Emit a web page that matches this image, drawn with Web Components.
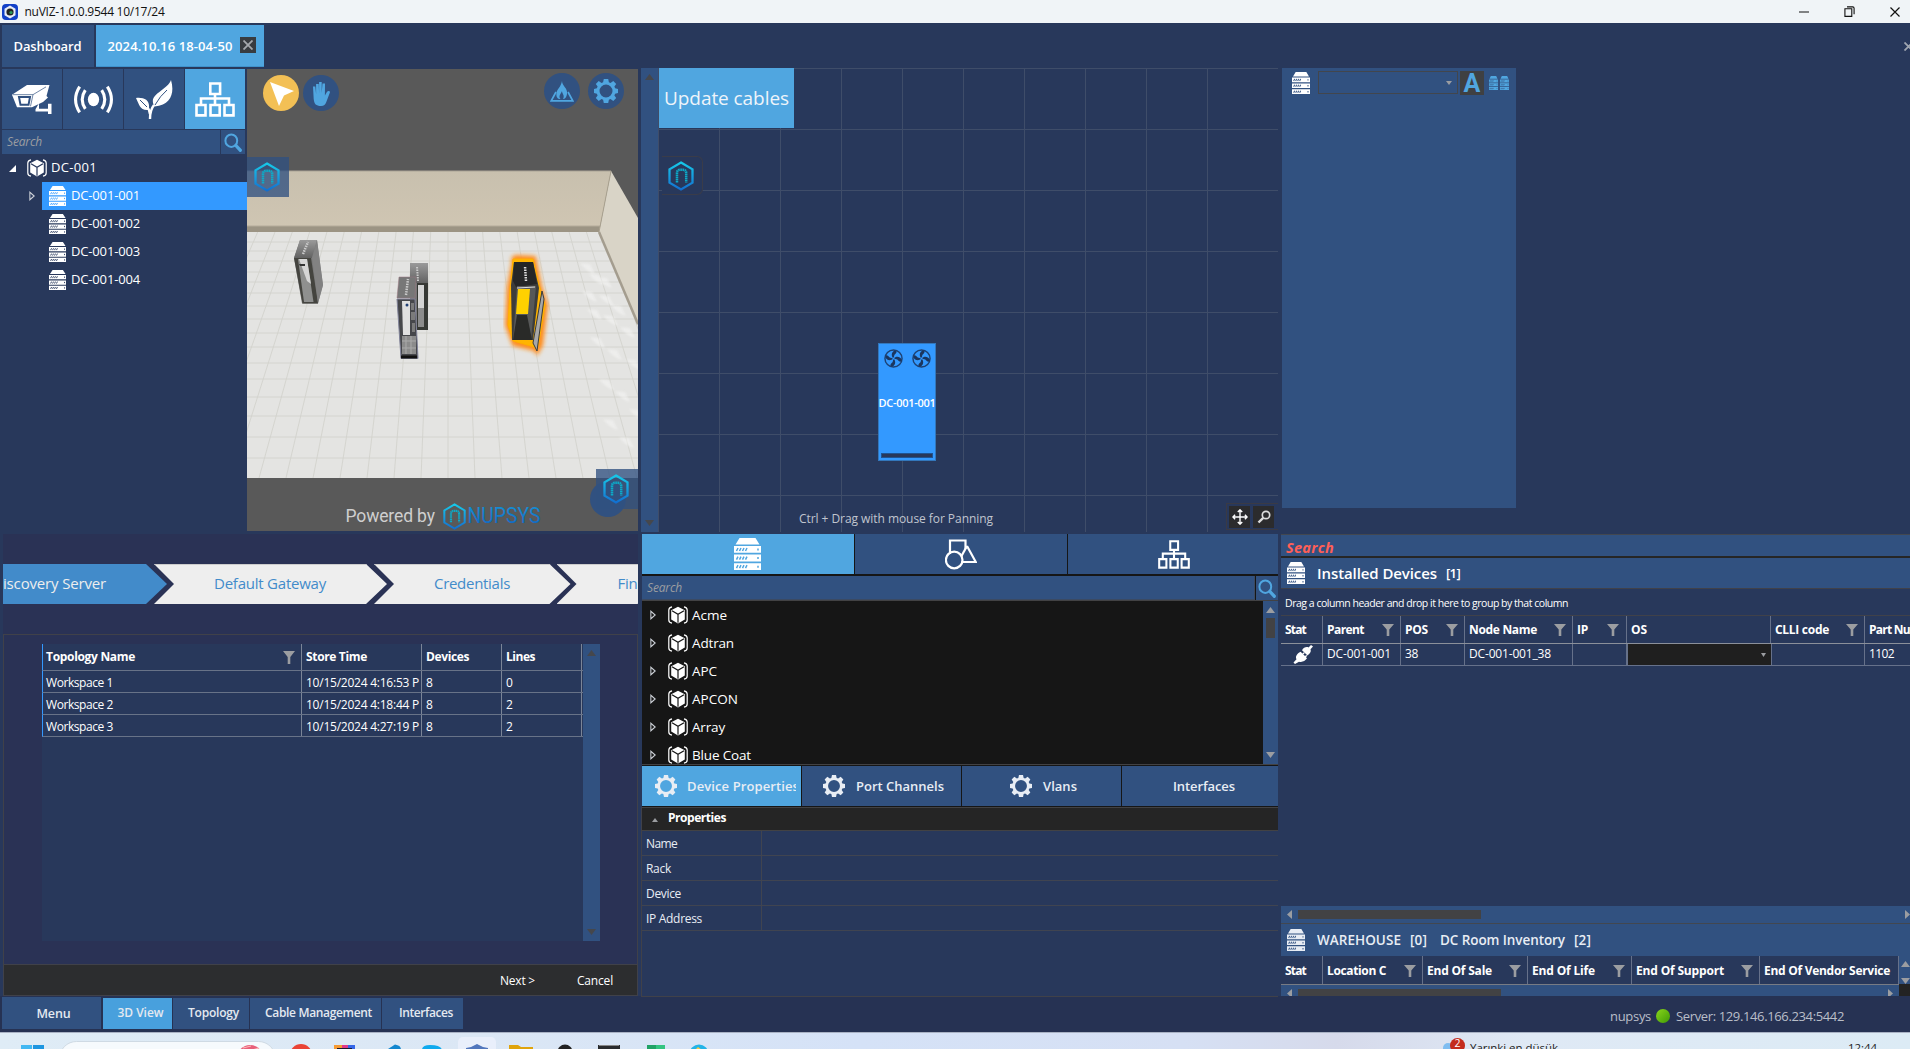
<!DOCTYPE html>
<html lang="en">
<head>
<meta charset="utf-8">
<title>nuVIZ</title>
<style>
html,body{margin:0;width:1910px;height:1049px;overflow:hidden;background:#28385b}
body{font-family:"Open Sans","Noto Sans",sans-serif;font-size:12.5px;color:#fff;line-height:1}
</style>
</head>
<body>
<nu-app></nu-app>
<script>
const ICONS = {
server: ['0 0 27 32', `<path fill="currentColor" d="M5.500 0h16L25.500 6.500h-24zM0 8h27v6.800H0zM0 16.600h27v6.800H0zM0 25.200h27V32H0z"/><g stroke="var(--hole,#28385b)" stroke-width="1.500"><path d="M2.500 13l1.500-3M5.500 13l1.500-3M8.500 13l1.500-3M11.500 13l1.500-3M2.500 21.600l1.500-3M5.500 21.600l1.500-3M8.500 21.600l1.500-3M11.500 21.600l1.500-3M2.500 30.200l1.500-3M5.500 30.200l1.500-3M8.500 30.200l1.500-3M11.500 30.200l1.500-3M24 10.500v2M24 19v2M24 27.700v2"/></g>`],
cube: ['0 0 20 18', `<path fill="currentColor" d="M10 .8l6.800 3.500v9.300L10 17.400 3.200 13.600V4.300z"/><path d="M4 4.700l6 3.600 6-3.600M10 8.300v8.500" fill="none" stroke="var(--hole,#28385b)" stroke-width="1.200"/><path d="M4 .8C1.500 1.300.8 2 .8 4v10c0 2 .7 2.700 3.200 3.200M16 .8c2.500.5 3.200 1.200 3.200 3.200v10c0 2-.7 2.700-3.200 3.200" fill="none" stroke="currentColor" stroke-width="1.200"/>`],
net: ['0 0 40 35', `<path fill="none" stroke="currentColor" stroke-width="2.600" d="M15.300 1.500h9.800v10.500h-9.800zM1.500 23h9v10.400h-9zM15.500 23h9.200v10.400h-9.200zM29.500 23h9v10.400h-9zM20 12v11M6 23v-6.500h28V23"/>`],
camera: ['0 0 40 31', `<path fill="currentColor" d="M0 11L15 1h22.500l-3 11.500L36 14l-5 4.500-11 5.500H5z"/><path d="M7 13.500h11l-1.500 8H8.500z" fill="none" stroke="#315180" stroke-width="2"/><path d="M21 11l-2.500 12M1 11h20l13-8" fill="none" stroke="#315180" stroke-width=".7"/><path d="M27 20v5.500h9v-5h3.500V31H36v-2.500H23.500v-2.500" fill="currentColor"/>`],
waves: ['0 0 40 28', `<ellipse cx="20" cy="14" rx="5.500" ry="6.500" fill="currentColor"/><path fill="none" stroke="currentColor" stroke-width="3" d="M12 5q-6 9 0 18M6.500 1.500q-8 12.500 0 25M28 5q6 9 0 18M33.500 1.500q8 12.500 0 25"/>`],
leaf: ['0 0 37 39', `<path fill="currentColor" d="M35 0C38.500 12 36 25 18.500 26.500 11 14 31 11 35 0zM0 18c9-1 15 3 12.500 12C4 31 3 24 0 18z"/><path d="M18 25Q14 30 14 39M3 20Q13 25 14 34" stroke="currentColor" stroke-width="2.400" fill="none"/><path d="M31 10Q24 16 19 25M4 20l7 7" stroke="#315180" fill="none"/>`],
search: ['0 0 18 18', `<circle cx="7.300" cy="7.300" r="5.900" fill="none" stroke="currentColor" stroke-width="2"/><path d="M12 12l4.300 4.300" stroke="currentColor" stroke-width="3.200" stroke-linecap="round"/>`],
gear: ['0 0 24 24', `<path fill="currentColor" fill-rule="evenodd" d="M9.800 0h4.400l.7 3.200 1.600.7L19.300 2l2.900 2.900-1.800 2.700.7 1.700 2.900.6v4.200l-2.900.6-.7 1.700 1.800 2.700-2.900 2.900-2.800-1.900-1.600.7-.7 3.200H9.800l-.7-3.200-1.600-.7L4.700 22l-2.900-2.900 1.800-2.700-.7-1.700L0 14.100V9.900l2.900-.6.7-1.700L1.800 4.900 4.700 2l2.800 1.900 1.600-.7zM12 5.500a6.500 6.500 0 100 13 6.500 6.500 0 000-13z"/>`],
filter: ['0 0 12 13', `<path fill="#9b9da1" d="M0 0h12L7.300 6v7H4.700V6z"/>`],
pointer: ['0 0 24 24', `<path fill="#fff" d="M0 0l24 9-10 4.500L9 24z"/>`],
hand: ['0 0 18 24', `<path fill="currentColor" d="M1 4.500h2.300l.8 7.500V2h2.600l.4 9V0h2.600v11L10.500 1.500H13l-.1 12 2-3.500c1-1.700 3.400-1.200 3 .6l-3.600 9.400c-1 2.700-2.300 4-5.300 4-5 0-6.800-2-7.300-7z"/>`],
fire: ['0 0 24 21', `<path fill="none" stroke="currentColor" stroke-width="1.700" d="M6 11L1.200 19.800h21.600L18 11"/><path fill="currentColor" d="M12 0c0 5 6 7 5 13-.4 3-2 5-4 5 2-4-1-5-1-8-1 3-4 5-1.500 8-3 0-4.500-2-4-6C7 8 11 6 12 0z"/>`],
hex: ['0 0 26 30', `<defs><linearGradient id="g" x2="0" y2="1"><stop stop-color="#16c8e8"/><stop offset=".6" stop-color="#1696dc"/><stop offset="1" stop-color="#116fd0"/></linearGradient></defs><path d="M13 1.500l11.500 6.800v13.400L13 28.500 1.500 21.700V8.300z" fill="none" stroke="url(#g)" stroke-width="2.300"/><path d="M9 21.500V12q0-3.200 3-3.200h3q3.200 0 3.200 3.200v9.500" fill="none" stroke="#0caac8" stroke-width="2.500" stroke-dasharray="1.600 .5"/>`],
shapes: ['0 0 32 31', `<g fill="none" stroke="currentColor" stroke-width="2.200"><path d="M5 15V1.500h15.500v8.500"/><circle cx="9.200" cy="21" r="8.300"/><path d="M22 7l8.800 16H16.500"/><path d="M22 7l-5.500 10"/></g>`],
fan: ['0 0 20 20', `<circle cx="10" cy="10" r="9" fill="none" stroke="#1d4173" stroke-width="1.500"/><path fill="#1b365f" d="M10 10C7 7 8 3 11 1.500c4 0 2 3 0 4.500zM10 10c3-3 7-2 8.500 1 0 4-3 2-4.500 0zM10 10c3 3 2 7-1 8.500-4 0-2-3 0-4.500zM10 10c-3 3-7 2-8.500-1 0-4 3-2 4.500 0z"/><circle cx="10" cy="10" r="1" fill="#3399ff"/>`],
move: ['0 0 18 18', `<path fill="none" stroke="#fff" stroke-width="1.600" d="M9 1v16M1 9h16M6.500 3.500L9 1l2.500 2.500M6.500 14.500L9 17l2.500-2.500M3.500 6.500L1 9l2.500 2.500M14.500 6.500L17 9l-2.500 2.500"/>`],
zoom: ['0 0 14 14', `<circle cx="9" cy="5" r="3.700" fill="none" stroke="#ddd" stroke-width="1.700"/><path d="M6.200 7.800L1.500 12.500" stroke="#ddd" stroke-width="2.400"/>`],
plug: ['0 0 20 20', `<path fill="currentColor" d="M18 0l2 1.500-2.500 3c1 3-1 5-3 6.500L9 5.500C10.500 3 13 1.500 15.500 2.500zM7.500 7l2 2 1.300-1.300.9.900-1.400 1.400 1.700 1.700 1.300-1.300.9.900L13 13l1 1c-2 3-5 4.500-8 3.500L2 20 .5 18.500l3-3.500C2 12 4 9 7.500 7z"/>`],
restore: ['0 0 12 12', `<path fill="none" stroke="#111" stroke-width="1.200" d="M1 3h7.500v8.300H1zM3.300 1h6.200q1.500 0 1.500 1.500V9"/>`],
x: ['0 0 10 10', `<path stroke="currentColor" stroke-width="var(--sw,1.200)" d="M.5.5l9 9M9.500.5l-9 9"/>`],
up: ['0 0 9 6', `<path fill="currentColor" d="M4.500 0L9 6H0z"/>`],
down: ['0 0 9 6', `<path fill="currentColor" d="M4.500 6L9 0H0z"/>`],
left: ['0 0 6 9', `<path fill="currentColor" d="M0 4.500L6 0v9z"/>`],
right: ['0 0 6 9', `<path fill="currentColor" d="M6 4.500L0 0v9z"/>`],
closed: ['0 0 7 10', `<path fill="none" stroke="#cfd3da" stroke-width="1.200" d="M1 1.200L6 5 1 8.800z"/>`],
open: ['0 0 7 7', `<path fill="#fff" d="M7 0v7H0z"/>`],
app: ['0 0 16 16', `<rect width="16" height="16" rx="4" fill="#1240c8"/><path d="M8 1.500l5.500 3.200v6.600L8 14.500l-5.500-3.200V4.700z" fill="#e8ecf4"/><circle cx="8" cy="8" r="3.600" fill="#222"/><circle cx="9" cy="8.500" r="1.600" fill="#2c9a5a"/>`]
};

function define(name, render) {
  customElements.define(name, class extends HTMLElement {
    constructor() { super(); this.attachShadow({mode: 'open'}); }
    connectedCallback() { if (!this.shadowRoot.firstChild) this.shadowRoot.innerHTML = render(this); }
  });
}
const attr = (e, n, d = '') => e.hasAttribute(n) ? e.getAttribute(n) : d;
const I = (n, w, h, s = '') => `<ui-icon name="${n}" w="${w}" h="${h}" style="${s}"></ui-icon>`;
const T = (t, w, s = '') => `<ui-text w="${w}" style="${s}">${t}</ui-text>`;

/* Label whose tracking is tuned so that it fills the given width. */
customElements.define('ui-text', class extends HTMLElement {
  constructor() {
    super();
    this.attachShadow({mode: 'open'}).innerHTML = '<style>:host{display:inline-block;white-space:pre;flex:none;line-height:1.4}</style><span><slot></slot></span>';
  }
  connectedCallback() { queueMicrotask(() => this.fit()); }
  fit() {
    const w = +this.getAttribute('w'), n = this.textContent.length;
    if (!w || !n) return;
    const span = this.shadowRoot.querySelector('span');
    const natural = span.getBoundingClientRect().width;
    if (natural) span.style.letterSpacing = ((w - natural) / n).toFixed(3) + 'px';
  }
});

define('ui-icon', e => {
  const [vb, body] = ICONS[attr(e, 'name')];
  return `<style>:host{display:block;flex:none;width:${attr(e,'w')}px;height:${attr(e,'h')}px}svg{display:block;width:100%;height:100%}</style><svg viewBox="${vb}" preserveAspectRatio="none">${body}</svg>`;
});

/* Scroll bar: dir is v or h; thumb is "before,length". */
define('ui-scroll', e => {
  const v = attr(e, 'dir', 'v') === 'v', th = attr(e, 'thumb');
  const [a, l] = th.split(',');
  return `<style>:host{display:flex;box-sizing:border-box;flex:none;flex-direction:${v?'column':'row'};align-items:center;justify-content:space-between;background:#315180;color:${attr(e,'color','#9b9da1')};padding:${attr(e,'pad',v?'6px 0':'0 6px')};overflow:hidden}
  .track{flex:1;align-self:stretch;display:flex;flex-direction:${v?'column':'row'};align-items:center}
  .thumb{background:#424244;${v?`width:9px;height:${l}px;margin-top:${a}px`:`height:9px;width:${l}px;margin-left:${a}px`}}</style>
  ${I(v?'up':'left', v?9:5, v?6:9)}<div class="track">${th?'<div class="thumb"></div>':''}</div>${I(v?'down':'right', v?9:5, v?6:9)}`;
});

define('nu-titlebar', () => `<style>:host{display:flex;align-items:center;height:23px;background:#f0f4f7;color:#111;padding-left:2px}
.w{margin-left:auto;display:flex;align-items:center;height:20px}</style>
${I('app',16,16)}${T('nuVIZ-1.0.0.9544 10/17/24',140,'margin-left:6.500px;font-size:12px;margin-top:1px')}
<div class="w"><svg width="10" height="2"><path d="M0 1h10" stroke="#111"/></svg>${I('restore',11,11,'margin-left:35px')}${I('x',10,10,'margin:0 10px 0 35px')}</div>`);

define('nu-doctabs', () => `<style>:host{display:flex;height:45px;padding:2px 0 0 2px;gap:2px;box-sizing:border-box;font-size:13px;font-weight:600}
div{height:42px;box-sizing:border-box;background:#315180;display:flex;align-items:center;padding:1px 12px 0 11.500px}
.a{background:#50a6e0;border-bottom:1px solid #3f92cc;padding:1px 8px 0 12px}.c{width:16px;height:16px;padding:3px;background:#383b40;color:#a5a8ad;--sw:1.800;margin:-2px 0 0 7px}
.z{background:none;padding:0;margin-left:auto;width:6px;overflow:hidden;color:#9fa5b0;--sw:2}</style>
<div>${T('Dashboard',68)}</div><div class="a">${T('2024.10.16 18-04-50',125)}<div class="c">${I('x',10,10)}</div></div><div class="z">${I('x',9,9)}</div>`);

define('nu-searchbox', e => `<style>:host{display:flex;height:24px;gap:1px;font-style:italic;font-size:12px;color:#9b9da1}
.f{flex:1;background:#315180;display:flex;align-items:center;padding:1px 0 0 5px;box-sizing:border-box;border:solid #3b4a63;border-width:0 ${attr(e,'line','0')}px ${attr(e,'line','0')}px 0}.b{width:${attr(e,'bw','24')}px;background:#315180;color:#50a6e0;display:flex;align-items:center;justify-content:center;overflow:hidden}</style>
<div class="f">${T('Search',35)}</div><div class="b">${I('search',18,19)}</div>`);

define('nu-toolbar', () => `<style>:host{display:flex;gap:1px;height:60px}div{width:60px;display:flex;align-items:center;justify-content:center;background:#315180}div:last-child{background:#50a6e0}</style>
<div>${I('camera',40,30)}</div><div>${I('waves',41,29)}</div><div>${I('leaf',37,39)}</div><div>${I('net',40,35)}</div>`);

define('nu-sitetree', () => {
  const row = (n, sel) => `<div class="r"><span class="e">${sel?I('closed',6,10):''}</span><div class="n ${sel?'s':''}">${I('server',17.5,20,sel?'--hole:#3399ff':'')}${T(n,69,'margin:-2px 0 0 5px')}</div></div>`;
  return `<style>:host{display:block;font-size:13px}.r{display:flex;height:28px;align-items:center}.e{width:13px;padding-left:29px;flex:none}.n{height:28px;flex:1;display:flex;align-items:center;padding-left:6.500px}.s{background:#3399ff}</style>
  <div class="r">${I('open',7,7,'margin-left:9px')}${I('cube',20,18,'margin-left:11px')}${T('DC-001',46,'margin:-1px 0 0 4px')}</div>
  ${row('DC-001-001',1)}${row('DC-001-002')}${row('DC-001-003')}${row('DC-001-004')}`;
});

define('nu-scene', () => {
  let tiles = '';
  for (let k = -13; k < 15; k++) tiles += `M${201+17.3*k} 163L${201+27*k} 409`;
  for (const y of [173,182,192,203,213,224,237,250,264,278,294,310,328,347,368,389]) tiles += `M0 ${y}H391`;
  let gloss = '';
  for (const [x,y] of [[333,194],[342,205],[350,208],[335,222],[352,226],[364,236],[340,240],[356,246],[373,258],[343,268],[360,280],[379,290],[352,310],[368,322],[382,340],[356,350],[372,368]]) gloss += `M${x} ${y}q6 9 15 11l-5-10z`;
  return `<style>:host{display:block;position:relative;width:391px;height:462px;background:#595959;overflow:hidden}
  svg.s{display:block}.c{position:absolute;width:36px;height:36px;border-radius:50%;background:#315180;color:#50a6e0;display:flex;align-items:center;justify-content:center}
  .l{position:absolute;width:42px;height:40px;box-sizing:border-box;padding:5px 0 0 7px;background:rgba(49,81,128,.78)}</style>
  <svg class="s" width="391" height="462">
  <defs><linearGradient id="w" x2="0" y2="1"><stop stop-color="#c8c0ae"/><stop offset="1" stop-color="#d0c6b3"/></linearGradient>
  <linearGradient id="k" x2="0" y2="1"><stop stop-color="#9a9a9a"/><stop offset="1" stop-color="#626262"/></linearGradient>
  <linearGradient id="n" x2="0" y2="1"><stop stop-color="#1596d8"/><stop offset="1" stop-color="#1263c0"/></linearGradient>
  <clipPath id="f"><path d="M0 163H352L391 254V409H0z"/></clipPath><filter id="b"><feGaussianBlur stdDeviation="2"/></filter><filter id="b1"><feGaussianBlur stdDeviation="1"/></filter></defs>
  <path d="M0 102H364L352 163H0z" fill="url(#w)"/><path d="M0 102H364" stroke="#aaa396"/>
  <path d="M0 157H353V163H0z" fill="#9c9484"/><path d="M0 157H353" stroke="#b4ab9a"/>
  <path d="M364 102L391 149V256L352 163z" fill="#d9d4c7"/><path d="M364 102l-12 61" stroke="#a9a18f"/>
  <path d="M0 163H352L391 256V409H0z" fill="#e4e4e2"/>
  <g clip-path="url(#f)"><path d="${tiles}" stroke="#d2d2cd" stroke-width=".9"/><path d="${gloss}" fill="#f6f6f5" opacity=".55" filter="url(#b1)"/></g>
  <path d="M352 163L391 255" stroke="#a49d8f" stroke-width="2.500"/>
  <path d="M53 171H70L76 216 71 234.500H55L47 189z" fill="#777"/><path d="M53 171H70L65 189H47z" fill="url(#k)"/><path d="M47 189H64L71 234.500H55.500z" fill="#44443f"/><path d="M51 190H60L66.500 233H57z" fill="#8f908f"/><path d="M52 190h8l4 25-4-3z" fill="#d6d6d6"/><path d="M52 195h6v2h-5z" fill="#333"/><path d="M65 189L70 171 76 216 71 234z" fill="#858585" opacity=".8"/><path d="M56 185l5-12" stroke="#ccc" stroke-width="2.500" stroke-dasharray="1.500 1"/>
  <path d="M163 194H181V261H163z" fill="#777"/><path d="M163 194H181V214H163z" fill="url(#k)"/><path d="M170 214H181V261H170z" fill="#373935"/><path d="M171 216h6v23h-6z" fill="#d4d4d4"/><path d="M171 239h6v19h-6z" fill="#8c8c8c"/><path d="M171 212l-1-15" stroke="#ccc" stroke-width="2" stroke-dasharray="1.500 1"/>
  <path d="M152 208H169L168 229H150z" fill="#777" stroke="#9a7680" stroke-width=".5"/><path d="M150 230H168L171 289.500H154z" fill="#46474b" stroke="#818399"/><path d="M155 232h8v34h-7z" fill="#e0e0e0"/><path d="M164 234h3v7h-3zM164 243h4v8h-4zM165 254h3v9h-3z" fill="#7b7b7b"/><circle cx="160" cy="236" r="1.500" fill="#214075"/><path d="M155 267H169V285H155z" fill="#8b8b8b"/><path d="M159 267v18M164 267v18M155 272h14M155 279h14" stroke="#aaa"/><path d="M154 286.500h16v3h-16z" fill="#111"/><path d="M159 226l2-16" stroke="#ccc" stroke-width="2.500" stroke-dasharray="1.500 1"/>
  <path d="M267 192Q265 189 269 188L287 189 293 218 299 236 294 276 290 283 288 280 267 275 260 256 262 218z" fill="#ff8c1a" stroke="#ff8c1a" stroke-width="4" filter="url(#b)"/>
  <path d="M266 190L286 190 291 212 298 236 292 273 290 281 287 278 266 272 261 256 263 220z" fill="#ffb400" stroke="#ffae00" stroke-width="1"/>
  <path d="M267 193H286L292 219 286 271H265L264 216z" fill="#3c3d3c"/><path d="M267 193H286L290 215 269 218 266 212z" fill="#252627"/><path d="M270 217H289L284 271H266z" fill="#575858"/><path d="M271 220H283L281 245H269z" fill="#ffd100"/><path d="M270 246H280L285 271H266z" fill="#292a28"/><path d="M270 219l18-1" stroke="#ddd"/><path d="M295 222L297 230 290 282 286 274z" fill="#a8a8a8" stroke="#3b3b3b"/><path d="M279 212l-1-15" stroke="#ddd" stroke-width="2.500" stroke-dasharray="1.500 1"/>
  <g font-family="Roboto"><text x="98.500" y="453" font-size="17.500" fill="#cfcfcf" textLength="89.500">Powered by</text>
  <text x="220.500" y="453.500" font-size="22" fill="url(#n)" textLength="73" lengthAdjust="spacingAndGlyphs">NUPSYS</text></g></svg>
  ${I('hex',23,27,'position:absolute;left:195.500px;top:434px')}
  <div class="c" style="left:16px;top:6px;background:#f3c055;">${I('pointer',24,24,'margin:2px 0 0 2px')}</div>
  <div class="c" style="left:56px;top:6px">${I('hand',18,24,'margin-top:2px')}</div>
  <div class="c" style="left:297px;top:4px">${I('fire',24,21)}</div>
  <div class="c" style="left:341px;top:4px">${I('gear',24,24)}</div>
  <div class="c" style="left:343px;top:412px"></div>
  <div class="l" style="left:0;top:88px">${I('hex',26,30)}</div><div class="l" style="left:349px;top:400px">${I('hex',26,30)}</div>`;
});

define('nu-canvas', () => `<style>:host{display:block;position:relative;width:620px;height:464px;overflow:hidden;
background:repeating-linear-gradient(90deg,transparent 0 60px,#3f4d69 60px 61px) -60px 0,repeating-linear-gradient(#3f4d69 0 1px,transparent 1px 61px),#28385b}
.u{width:135px;height:60px;background:#50a6e0;display:flex;align-items:center;justify-content:center;font-size:19px;position:absolute;left:1px;top:0;color:#eef4fa;padding-top:1px;box-sizing:border-box}
.h{position:absolute;left:4px;top:88px;width:41px;height:39px;box-sizing:border-box;border:1px solid #3a3c49;border-left:0;border-radius:0 6px 6px 0;background:#28385b;padding:4px 0 0 6px}
.n{position:absolute;left:220px;top:275px;width:58px;height:118px;box-sizing:border-box;background:#3399ff;border:1px solid #3377bb;display:flex;flex-direction:column;align-items:center;font-size:11px;font-weight:600}
.f{display:flex;gap:9px;margin-top:5px}.b{box-sizing:border-box;width:52px;height:5px;background:#28385b;border:1px solid #205493;margin-top:43px}
.t{position:absolute;left:141px;top:443px;font-size:12px;color:#c0c5cf}.m{position:absolute;left:568px;top:435px;width:50px;height:25px;border:1px solid #3a3a45;display:flex;align-items:center;gap:3px;padding-left:2px}
.m div{width:21px;height:22px;background:#2b2b2d;display:flex;align-items:center;justify-content:center}</style>
<div class="u">${T('Update cables',125)}</div><div class="h">${I('hex',26,30)}</div>
<div class="n"><div class="f">${I('fan',19,19)}${I('fan',19,19)}</div>${T('DC-001-001',57,'margin-top:27px')}<div class="b"></div></div>
<div class="t">${T('Ctrl + Drag with mouse for Panning',194)}</div><div class="m"><div>${I('move',16,16)}</div><div>${I('zoom',14,14)}</div></div>`);

define('nu-wizard', () => {
  const cell = (t, w, pad = 4) => `<div class="c">${T(t,w,`margin-left:${pad}px`)}</div>`;
  const row = (n, t, l) => `<div class="row">${cell(n,67,3)}${cell(t,113)}${cell(8,7)}${cell(l,7)}</div>`;
  return `<style>:host{display:flex;flex-direction:column;width:635px;height:462px;background:#2a3255;margin-left:3px}
  .ch{height:40px;margin-top:30px;display:flex;font-size:15px;overflow:hidden;color:#428bca}
  .ch div{height:40px;box-sizing:border-box;background:#eee;display:flex;align-items:center;flex:none;border-top:1px solid #ccc;padding-bottom:2px}
  .ch .a{background:#428bca;color:#eee;width:164px;clip-path:polygon(0 0,143px 0,100% 50%,143px 100%,0 100%);border:0}
  .ch .m{clip-path:polygon(0 0,calc(100% - 21px) 0,100% 50%,calc(100% - 21px) 100%,0 100%,20px 50%)}
  .g{margin-top:30px;flex:1;border:1px solid #404149;border-bottom:0;box-sizing:border-box;padding:9px 0 0 38px;display:flex;align-items:flex-start}
  .t{width:541px;height:297px;background:#28385b}
  .row{display:grid;grid-template-columns:259px 120px 80px 80px;height:22px;border-bottom:1px solid #687388;border-left:1px solid #3399ff;box-sizing:border-box;width:541px}
  .row.h{height:27px;font-weight:700;font-size:12px}.c{border-right:1px solid #7b8597;display:flex;align-items:center;overflow:hidden;font-size:12px;padding-top:3px}.h .c{padding-top:0}
  .ft{height:32px;background:#2c2d2f;border:1px solid #404149;border-width:1px;box-sizing:border-box;display:flex;align-items:center;font-size:12px;padding:2px 0 0 496px}</style>
  <div class="ch"><div class="a">${T('iscovery Server',103)}</div><div class="m" style="width:233px;margin-left:-13px">${T('Default Gateway',112,'margin-left:60px')}</div><div class="m" style="width:196.500px;margin-left:-13px">${T('Credentials',76,'margin-left:60px')}</div><div class="m" style="width:102px;margin-left:-14px">${T('Fin',20,'margin-left:61px')}</div></div>
  <div class="g"><div class="t"><div class="row h"><div class="c">${T('Topology Name',89,'margin-left:3px')}${I('filter',12,13,'margin-left:148px')}</div>${cell('Store Time',61)}${cell('Devices',43)}${cell('Lines',29)}</div>
  ${row('Workspace 1','10/15/2024 4:16:53 P','0')}${row('Workspace 2','10/15/2024 4:18:44 P','2')}${row('Workspace 3','10/15/2024 4:27:19 P','2')}</div>
  <ui-scroll style="width:17px;height:297px" color="#45474c"></ui-scroll></div>
  <div class="ft">${T('Next &gt;',35)}${T('Cancel',36,'margin-left:42px')}</div>`;
});

define('nu-catalog', () => `<style>:host{display:block;width:636px;background:#161616;height:273px;margin-left:2px}
.tabs{display:grid;grid-template-columns:212px 212px 210px;gap:1px;height:40px}.tabs div{background:#315180;display:flex;align-items:center;justify-content:center}.tabs .a{background:#50a6e0;--hole:#50a6e0}
nu-searchbox{margin-top:2px}.b{display:flex;height:163px;border-top:1px solid #424244;border-bottom:1px solid #424244;overflow:hidden}.l{flex:1;font-size:13.500px;--hole:#161616}
.r{height:28px;display:flex;align-items:center;padding-left:8px}
.p{display:grid;grid-template-columns:159px 159px 159px 156px;gap:1px;height:40px;margin-top:1px;font-size:13px;font-weight:600;color:#e8edf4}.p div{background:#315180;display:flex;align-items:center;overflow:hidden}.p .a{background:#50a6e0;box-sizing:border-box;border-right:5px solid #50a6e0}</style>
<div class="tabs"><div class="a">${I('server',27,32,'margin-right:2px')}</div><div>${I('shapes',32,31)}</div><div>${I('net',32,29,'margin-left:2px')}</div></div>
<nu-searchbox line="1" bw="22"></nu-searchbox>
<div class="b"><div class="l">${[['Acme',35],['Adtran',42],['APC',25],['APCON',46],['Array',33],['Blue Coat',59]].map(([n,w])=>`<div class="r">${I('closed',6,10)}${I('cube',20,18,'margin-left:12px')}${T(n,w,'margin-left:4px')}</div>`).join('')}</div><ui-scroll style="width:15px" thumb="5,20"></ui-scroll></div>
<div class="p"><div class="a">${I('gear',22,22,'margin-left:13px')}${T('Device Properties',112,'margin-left:10px')}</div><div>${I('gear',22,22,'margin-left:21px')}${T('Port Channels',88,'margin-left:11px')}</div><div>${I('gear',22,22,'margin-left:48px')}${T('Vlans',34,'margin-left:11px')}</div><div>${T('Interfaces',62,'margin-left:51px')}</div></div>`);

define('nu-properties', () => `<style>:host{display:block;width:637px;height:190px;margin-left:1px;border-left:1px solid #404149;border-bottom:1px solid #404149;box-sizing:border-box;font-size:12px;color:#e8edf4}
.h{height:24px;background:#252525;border-top:1px solid #424244;border-bottom:1px solid #424244;box-sizing:border-box;display:flex;align-items:center;padding:0 0 1px 10px;font-weight:700;color:#9b9da1}
.r{display:flex;height:25px;box-sizing:border-box;border-bottom:1px solid #404450}.r div{width:115px;padding:2px 0 0 4px;border-right:1px solid #404450;display:flex;align-items:center}</style>
<div class="h">${I('up',6,4,'margin-top:3px')}${T('Properties',58,'margin-left:10px;color:#fff')}</div>${[['Name',31],['Rack',25],['Device',35],['IP Address',56]].map(([n,w])=>`<div class="r"><div>${T(n,w)}</div></div>`).join('')}`);

define('nu-rackpanel', () => `<style>:host{display:flex;box-sizing:border-box;width:234px;height:440px;margin-left:2px;background:#315180;padding:3px 0 0 10px;align-items:flex-start;--hole:#315180}
.c{margin-left:8px;width:140px;height:23px;box-sizing:border-box;border:1px solid #42464d;display:flex;align-items:center;justify-content:flex-end;padding-right:5px;color:#9b9da1}
.a{margin-left:2px;width:24px;height:24px;background:#3f4042;color:#50a6e0;font:700 25px/25px Roboto;text-align:center}.d{display:flex;gap:2px;margin:5px 0 0 5px;color:#50a6e0}</style>
${I('server',18,22,'margin-top:1px')}<div class="c">${I('down',6,4)}</div><div class="a">A</div><div class="d">${I('server',9,14)}${I('server',9,14)}</div>`);

const head = (cols) => cols.map(([t,w,cw,f,fx]) => `<div class="c" style="width:${cw}px">${T(t,w)}${f?I('filter',12,12,`margin-left:${fx}px`):''}</div>`).join('');
const gridCss = `.c{box-sizing:border-box;flex:none;border-right:1px solid #66718a;display:flex;align-items:center;padding-left:4px}`;

define('nu-installed', () => `<style>:host{display:block;height:372px;margin-left:1px;overflow:hidden;font-size:12px}
.s{background:#315180;border-top:1px solid #424750;border-bottom:2px solid #262626;display:flex;align-items:center;padding:6px 0 0 5px;box-sizing:border-box;height:24px;color:#ff5f57;font:italic 700 14.500px "Open Sans"}
.b{height:30px;background:#315180;--hole:#315180;display:flex;align-items:center;padding-left:6px;font-size:15px;font-weight:600}
.g{height:28px;border:solid #404149;border-width:1px 0;box-sizing:border-box;display:flex;align-items:center;padding:2px 0 0 4px;font-size:10.500px}
.h{display:flex;height:28px;box-sizing:border-box;border-bottom:1px solid #8b909a;font-weight:700}.h .c{padding-top:1px}.r{display:flex;height:22px;box-sizing:border-box;border-bottom:1px solid #66718a}
${gridCss}.c.os{width:145px;background:#1f1f1f;border:1px solid #66718a;border-width:0 1px 0 1px;justify-content:flex-end;padding-right:5px;color:#9b9da1}</style>
<div class="s">${T('Search',48)}</div><div class="b">${I('server',18,22)}${T('Installed Devices',120,'margin-left:12px')}${T('[1]',14,'margin-left:9px;font-size:13px')}</div>
<div class="g">${T('Drag a column header and drop it here to group by that column',283)}</div>
<div class="h">${head([['Stat',21,42],['Parent',37,78,1,17.5],['POS',23,64,1,17.5],['Node Name',68,108,1,17],['IP',11,54,1,18.5],['OS',16,144],['CLLI code',54,94,1,17],['Part Nu',41,46]])}</div>
<div class="r"><div class="c" style="width:42px;padding-left:12px">${I('plug',20,19)}</div><div class="c" style="width:78px">${T('DC-001-001',64)}</div><div class="c" style="width:64px">${T('38',13)}</div><div class="c" style="width:108px">${T('DC-001-001_38',82)}</div><div class="c" style="width:54px"></div><div class="c os">${I('down',5,4)}</div><div class="c" style="width:93px"></div><div class="c" style="width:90px">${T('1102',25)}</div></div>`);

define('nu-warehouse', () => `<style>:host{display:block;height:90px;margin-left:1px;overflow:hidden;font-size:12px}
.b{height:33px;box-sizing:border-box;background:#315180;--hole:#315180;border-top:1px solid #424750;display:flex;align-items:center;padding-left:6px;font-size:13.500px;font-weight:600;color:#e8edf4}
.x{display:flex}.l{width:618px;flex:none}.h{display:flex;height:29px;box-sizing:border-box;border-bottom:1px solid #777b84;font-weight:700}${gridCss}.h .c{padding-top:2px}.v{width:11px}.q{height:12px;background:#232323}</style>
<ui-scroll dir="h" style="height:17px" thumb="6,183" pad="0 0 0 6px"></ui-scroll>
<div class="b">${I('server',18,22)}${T('WAREHOUSE',84,'margin-left:12px')}${T('[0]',17,'margin-left:9px')}${T('DC Room Inventory',125,'margin-left:13px')}${T('[2]',17,'margin-left:9px')}</div>
<div class="x"><div class="l"><div class="h">${head([['Stat',21,42],['Location C',59,100,1,17.5],['End Of Sale',65,105,1,17],['End Of Life',63,104,1,17.5],['End Of Support',88,128,1,17],['End Of Vendor Service',126,139]])}</div><ui-scroll dir="h" style="height:16px" thumb="6,203"></ui-scroll></div><div class="v"><ui-scroll style="height:28px;align-items:flex-end" pad="5px 0 0"></ui-scroll><div class="q"></div></div></div>`);

define('nu-statusbar', () => `<style>:host{display:flex;height:36px;background:#263253;padding-left:2px;box-sizing:border-box;font-size:12px;font-weight:600;color:#e4e9f0}
.t{height:31px;margin:2px 1px 0 0;background:#315180;display:flex;align-items:center;box-sizing:border-box}.t.m{height:32px;margin-top:1px;margin-right:2px;font-size:12.500px;padding-top:1px}.a{background:#48a0dd}
.s{margin-left:auto;display:flex;align-items:center;padding:4px 66px 0 0;font-size:13px;font-weight:400;color:#b9bec8}.d{width:14px;height:14px;border-radius:50%;background:linear-gradient(135deg,#8ad51c,#3f9a05);margin:0 6px 0 5px}</style>
<div class="t m" style="width:99px;padding-left:34.500px">${T('Menu',34)}</div><div class="t a" style="width:69px;padding-left:14.500px">${T('3D View',46)}</div><div class="t" style="width:76px;padding-left:15px">${T('Topology',51)}</div><div class="t" style="width:131px;padding-left:15px">${T('Cable Management',107)}</div><div class="t" style="width:81px;padding-left:17px">${T('Interfaces',54)}</div>
<div class="s">${T('nupsys',41)}<div class="d"></div>${T('Server: 129.146.166.234:5442',168)}</div>`);

define('nu-taskbar', () => `<style>:host{display:block;height:17px;overflow:hidden;position:relative;border-top:1px solid #a9b2c4;box-sizing:border-box;color:#222;background:linear-gradient(90deg,#dfecf6,#dbe7f5 25%,#d5e2f7 45%,#d6e0f4 62%,#d6daeb 70%,#dfe9f5 80%,#dcebf5)}
svg{display:block}.w,.k{position:absolute;top:6.500px;left:1470px;font-size:11.500px}.k{left:1848px}.n{position:absolute;left:1450px;top:5px;width:15px;height:15px;border-radius:50%;background:#c42b1c;color:#fff;font-size:10.500px;text-align:center}</style>
<svg width="1910" height="16"><path d="M21 12h11v5H21z" fill="#42b8f2"/><path d="M33 12h11v5H33z" fill="#1e96e0"/><rect x="59.500" y="8.500" width="216" height="34" rx="17" fill="#f6fafd" stroke="#cfdae4"/><circle cx="250" cy="25" r="13" fill="#e8607a"/><path d="M243 15l8-2M252 17l7-2" stroke="#fbb"/><circle cx="301" cy="22" r="11" fill="#ea4335"/><path d="M334 12h8v5h-8z" fill="#f59a33"/><path d="M342 12h6v5h-6z" fill="#e03a8a"/><path d="M348 12h7v5h-7z" fill="#3566e8"/><path d="M337 15h15v3h-15z" fill="#191930"/><path d="M388 16q6-4 7-4.500 6 1 6 5z" fill="#1387cf"/><path d="M422 17q0-5 8-5 11 0 12 5z" fill="#0faaee"/><rect x="458" y="4" width="38" height="30" rx="5" fill="#e9effb"/><path d="M466 15l5-1 6-3 6 3 5 1v3h-22z" fill="#5277bd"/><path d="M509 12h9l3 2h12v3h-24z" fill="#e0a40c"/><circle cx="565" cy="19" r="7.500" fill="#222"/><path d="M598 12h22v5h-22z" fill="#292b2d"/><path d="M599 12.500h20" stroke="#888"/><path d="M647 12h9v5h-9z" fill="#21a366"/><path d="M656 12h9v5h-9z" fill="#33c481"/><circle cx="699" cy="21" r="9.500" fill="#22b4e8"/><path d="M695 17l3-3 4 3z" fill="#ffc83d"/><circle cx="1448" cy="15" r="5" fill="#7fbdf0"/></svg>
<div class="n">2</div><div class="w">${T('Yarınki en düşük',88)}</div><div class="k">${T('12:44',29)}</div>`);

define('nu-app', () => `<style>:host{display:block;width:1910px;height:1049px;overflow:hidden;background:#28385b}
main{display:grid;grid-template-columns:640px 640px 630px;height:928px}main>*{min-width:0}
.l{display:flex;flex-direction:column}.top{display:flex;height:466px;box-sizing:border-box;padding-top:1px}.side{width:247px}.side>nu-toolbar{margin:0 0 1px 2px}.side>nu-searchbox{margin-left:2px;margin-right:2px}
.cv{display:flex;padding-left:1px;height:466px;box-sizing:border-box}.r{display:flex;flex-direction:column}.r1{height:466px}</style>
<nu-titlebar></nu-titlebar><nu-doctabs></nu-doctabs>
<main><div class="l"><div class="top"><div class="side"><nu-toolbar></nu-toolbar><nu-searchbox></nu-searchbox><nu-sitetree></nu-sitetree></div><nu-scene></nu-scene></div><nu-wizard></nu-wizard></div>
<div class="m"><div class="cv"><ui-scroll style="width:17px;height:464px" color="#45474c"></ui-scroll><nu-canvas></nu-canvas></div><nu-catalog></nu-catalog><nu-properties></nu-properties></div>
<div class="r"><div class="r1"><nu-rackpanel></nu-rackpanel></div><nu-installed></nu-installed><nu-warehouse></nu-warehouse></div></main>
<nu-statusbar></nu-statusbar><nu-taskbar></nu-taskbar>`);
</script>
</body>
</html>
